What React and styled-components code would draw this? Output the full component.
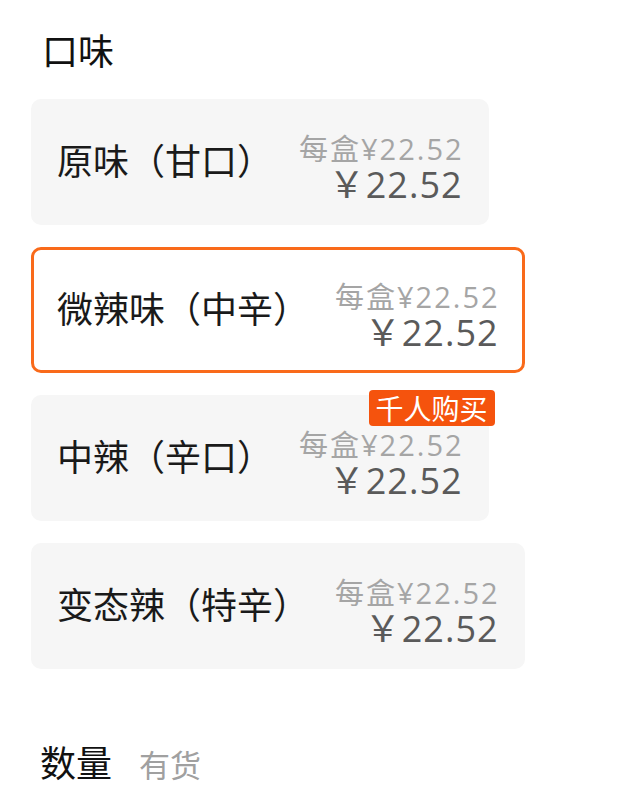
import React from "react";
import styled, { createGlobalStyle } from "styled-components";

const Global = createGlobalStyle`
  html, body { margin: 0; padding: 0; background: #fff; }
  body { font-family: "Open Sans", "Noto Sans CJK SC", sans-serif; }
`;

const Page = styled.div`
  width: 620px;
  padding: 24px 0 0 31px;
  box-sizing: border-box;
`;

const Title = styled.div`
  font-family: "Noto Sans CJK SC", sans-serif;
  font-size: 36px;
  line-height: 50px;
  color: #111;
  margin-left: 11px;
  margin-bottom: 25px;
`;

const List = styled.div`
  display: flex;
  flex-direction: column;
  align-items: flex-start;
  gap: 22px;
`;

const Card = styled.div`
  position: relative;
  display: flex;
  align-items: center;
  gap: 26px;
  box-sizing: border-box;
  height: 126px;
  padding: 0 24px 0 23px;
  border: 3px solid ${(p) => (p.$selected ? "#f96a1a" : "#f6f6f6")};
  border-radius: 10px;
  background: ${(p) => (p.$selected ? "#fff" : "#f6f6f6")};
`;

const Label = styled.div`
  font-family: "Noto Sans CJK SC", sans-serif;
  font-size: 36px;
  color: #1a1a1a;
  white-space: nowrap;
  margin-bottom: 6px;
`;

const Prices = styled.div`
  display: flex;
  flex-direction: column;
  align-items: flex-end;
  margin-top: 14px;
  font-family: "Open Sans", "Noto Sans CJK SC", sans-serif;
`;

const Unit = styled.div`
  font-size: 29px;
  line-height: 32px;
  letter-spacing: 2px;
  margin-right: -2px;
  color: #a5a5a5;
  white-space: nowrap;
`;

const Price = styled.div`
  font-size: 36px;
  line-height: 40px;
  letter-spacing: 1px;
  margin-right: -1px;
  color: #5a5a5a;
  white-space: nowrap;
`;

const Badge = styled.div`
  position: absolute;
  top: -8px;
  right: -9px;
  padding: 0 7px;
  height: 36px;
  line-height: 36px;
  border-radius: 4px;
  background: #f5530d;
  color: #fff;
  font-family: "Noto Sans CJK SC", sans-serif;
  font-size: 28px;
`;

const Footer = styled.div`
  display: flex;
  align-items: baseline;
  gap: 27px;
  margin-top: 66px;
  margin-left: 9px;
  font-family: "Noto Sans CJK SC", sans-serif;
`;

const FooterTitle = styled.span`
  font-size: 36px;
  color: #111;
`;

const Stock = styled.span`
  font-size: 31px;
  color: #a0a0a0;
`;

const options = [
  { name: "原味（甘口）" },
  { name: "微辣味（中辛）", selected: true },
  { name: "中辣（辛口）", badge: "千人购买" },
  { name: "变态辣（特辛）" },
];

export default function App() {
  return (
    <Page>
      <Global />
      <Title>口味</Title>
      <List>
        {options.map((o) => (
          <Card key={o.name} $selected={o.selected}>
            <Label>{o.name}</Label>
            <Prices>
              <Unit>每盒¥22.52</Unit>
              <Price>￥22.52</Price>
            </Prices>
            {o.badge && <Badge>{o.badge}</Badge>}
          </Card>
        ))}
      </List>
      <Footer>
        <FooterTitle>数量</FooterTitle>
        <Stock>有货</Stock>
      </Footer>
    </Page>
  );
}
